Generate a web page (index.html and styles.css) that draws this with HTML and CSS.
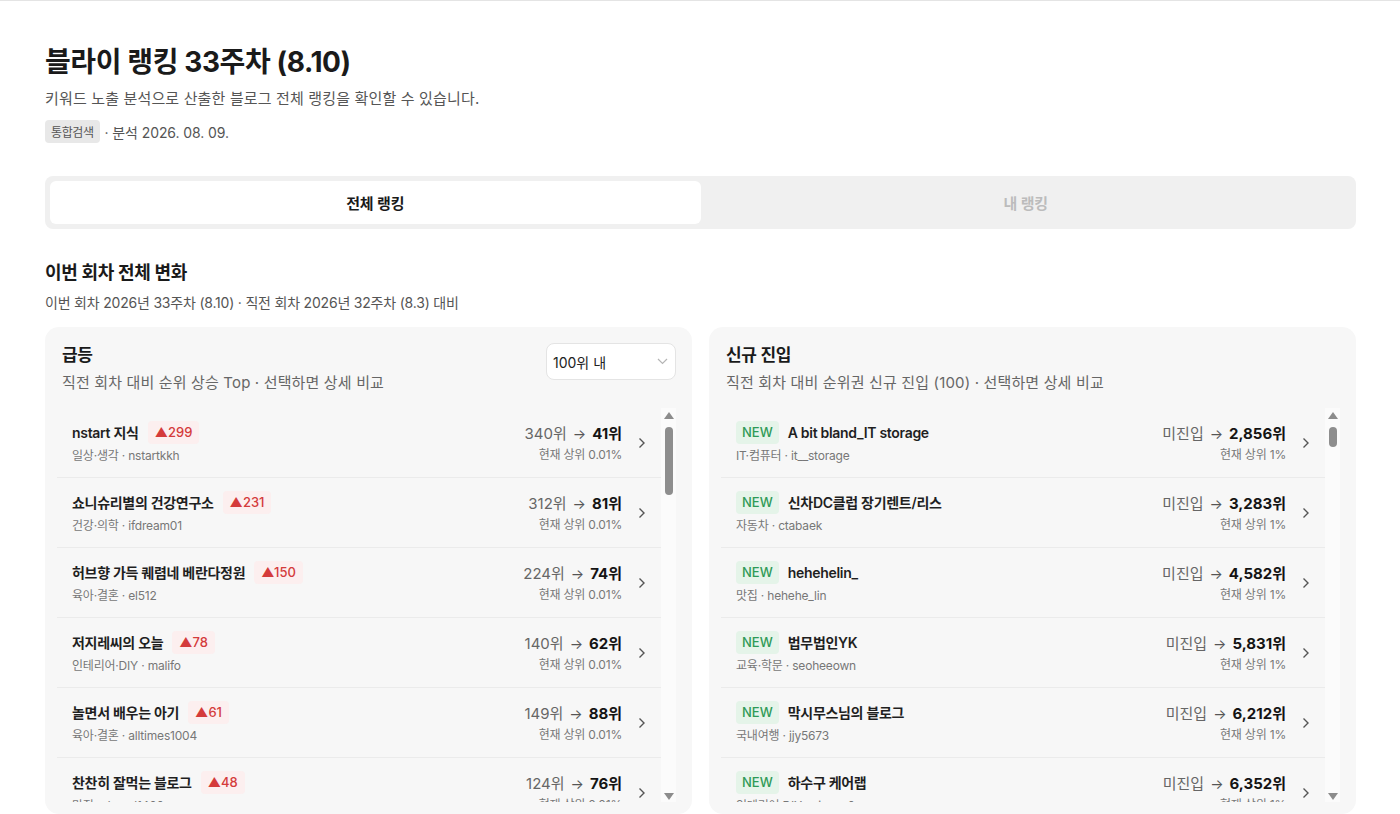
FILE: index.html
```html
<!DOCTYPE html>
<html lang="ko">
<head>
<meta charset="utf-8">
<title>블라이 랭킹 33주차 (8.10)</title>
<link rel="stylesheet" href="styles.css">
</head>
<body>
<div class="page">
  <h1 class="title">블라이 랭킹 33주차 (8.10)</h1>
  <p class="desc">키워드 노출 분석으로 산출한 블로그 전체 랭킹을 확인할 수 있습니다.</p>
  <div class="meta-line"><span class="tag">통합검색</span><span class="meta-text">· 분석 2026. 08. 09.</span></div>

  <div class="tabs">
    <button class="tab active">전체 랭킹</button>
    <button class="tab">내 랭킹</button>
  </div>

  <h2 class="section-title">이번 회차 전체 변화</h2>
  <p class="section-sub">이번 회차 2026년 33주차 (8.10) · 직전 회차 2026년 32주차 (8.3) 대비</p>

  <div class="cards">
    <section class="card">
      <div class="card-head">
        <div>
          <h3 class="card-title">급등</h3>
          <p class="card-sub">직전 회차 대비 순위 상승 Top · 선택하면 상세 비교</p>
        </div>
        <div class="select">
          <span>100위 내</span>
          <svg class="select-chev" width="11" height="7" viewBox="0 0 11 7"><path d="M1 1l4.5 4.5L10 1" fill="none" stroke="#b5b5b5" stroke-width="1.2"/></svg>
        </div>
      </div>
      <div class="list-wrap">
        <div class="list">
          <div class="row">
            <div class="row-main">
              <div class="row-name"><span class="name">nstart 지식</span><span class="badge up">▲299</span></div>
              <div class="row-meta">일상·생각 · nstartkkh</div>
            </div>
            <div class="row-stats">
              <div class="rank"><span class="prev">340위</span><span class="arrow">→</span><span class="now">41위</span></div>
              <div class="pct">현재 상위 0.01%</div>
            </div>
            <svg class="chev" width="8" height="12" viewBox="0 0 8 12"><path d="M1.5 1.5L6 6l-4.5 4.5" fill="none" stroke="#555" stroke-width="1.4"/></svg>
          </div>
          <div class="row">
            <div class="row-main">
              <div class="row-name"><span class="name">쇼니슈리별의 건강연구소</span><span class="badge up">▲231</span></div>
              <div class="row-meta">건강·의학 · ifdream01</div>
            </div>
            <div class="row-stats">
              <div class="rank"><span class="prev">312위</span><span class="arrow">→</span><span class="now">81위</span></div>
              <div class="pct">현재 상위 0.01%</div>
            </div>
            <svg class="chev" width="8" height="12" viewBox="0 0 8 12"><path d="M1.5 1.5L6 6l-4.5 4.5" fill="none" stroke="#555" stroke-width="1.4"/></svg>
          </div>
          <div class="row">
            <div class="row-main">
              <div class="row-name"><span class="name">허브향 가득 퀘렴네 베란다정원</span><span class="badge up">▲150</span></div>
              <div class="row-meta">육아·결혼 · el512</div>
            </div>
            <div class="row-stats">
              <div class="rank"><span class="prev">224위</span><span class="arrow">→</span><span class="now">74위</span></div>
              <div class="pct">현재 상위 0.01%</div>
            </div>
            <svg class="chev" width="8" height="12" viewBox="0 0 8 12"><path d="M1.5 1.5L6 6l-4.5 4.5" fill="none" stroke="#555" stroke-width="1.4"/></svg>
          </div>
          <div class="row">
            <div class="row-main">
              <div class="row-name"><span class="name">저지레씨의 오늘</span><span class="badge up">▲78</span></div>
              <div class="row-meta">인테리어·DIY · malifo</div>
            </div>
            <div class="row-stats">
              <div class="rank"><span class="prev">140위</span><span class="arrow">→</span><span class="now">62위</span></div>
              <div class="pct">현재 상위 0.01%</div>
            </div>
            <svg class="chev" width="8" height="12" viewBox="0 0 8 12"><path d="M1.5 1.5L6 6l-4.5 4.5" fill="none" stroke="#555" stroke-width="1.4"/></svg>
          </div>
          <div class="row">
            <div class="row-main">
              <div class="row-name"><span class="name">놀면서 배우는 아기</span><span class="badge up">▲61</span></div>
              <div class="row-meta">육아·결혼 · alltimes1004</div>
            </div>
            <div class="row-stats">
              <div class="rank"><span class="prev">149위</span><span class="arrow">→</span><span class="now">88위</span></div>
              <div class="pct">현재 상위 0.01%</div>
            </div>
            <svg class="chev" width="8" height="12" viewBox="0 0 8 12"><path d="M1.5 1.5L6 6l-4.5 4.5" fill="none" stroke="#555" stroke-width="1.4"/></svg>
          </div>
          <div class="row">
            <div class="row-main">
              <div class="row-name"><span class="name">찬찬히 잘먹는 블로그</span><span class="badge up">▲48</span></div>
              <div class="row-meta">맛집 · dmeal1400</div>
            </div>
            <div class="row-stats">
              <div class="rank"><span class="prev">124위</span><span class="arrow">→</span><span class="now">76위</span></div>
              <div class="pct">현재 상위 0.01%</div>
            </div>
            <svg class="chev" width="8" height="12" viewBox="0 0 8 12"><path d="M1.5 1.5L6 6l-4.5 4.5" fill="none" stroke="#555" stroke-width="1.4"/></svg>
          </div>
        </div>
        <div class="scrollbar">
          <span class="sb-up"></span>
          <div class="sb-track"><span class="sb-thumb thumb-rise"></span></div>
          <span class="sb-down"></span>
        </div>
      </div>
    </section>

    <section class="card">
      <div class="card-head">
        <div>
          <h3 class="card-title">신규 진입</h3>
          <p class="card-sub">직전 회차 대비 순위권 신규 진입 (100) · 선택하면 상세 비교</p>
        </div>
      </div>
      <div class="list-wrap">
        <div class="list">
          <div class="row">
            <div class="row-main">
              <div class="row-name"><span class="badge new">NEW</span><span class="name">A bit bland_IT storage</span></div>
              <div class="row-meta">IT·컴퓨터 · it__storage</div>
            </div>
            <div class="row-stats">
              <div class="rank"><span class="prev">미진입</span><span class="arrow">→</span><span class="now">2,856위</span></div>
              <div class="pct">현재 상위 1%</div>
            </div>
            <svg class="chev" width="8" height="12" viewBox="0 0 8 12"><path d="M1.5 1.5L6 6l-4.5 4.5" fill="none" stroke="#555" stroke-width="1.4"/></svg>
          </div>
          <div class="row">
            <div class="row-main">
              <div class="row-name"><span class="badge new">NEW</span><span class="name">신차DC클럽 장기렌트/리스</span></div>
              <div class="row-meta">자동차 · ctabaek</div>
            </div>
            <div class="row-stats">
              <div class="rank"><span class="prev">미진입</span><span class="arrow">→</span><span class="now">3,283위</span></div>
              <div class="pct">현재 상위 1%</div>
            </div>
            <svg class="chev" width="8" height="12" viewBox="0 0 8 12"><path d="M1.5 1.5L6 6l-4.5 4.5" fill="none" stroke="#555" stroke-width="1.4"/></svg>
          </div>
          <div class="row">
            <div class="row-main">
              <div class="row-name"><span class="badge new">NEW</span><span class="name">hehehelin_</span></div>
              <div class="row-meta">맛집 · hehehe_lin</div>
            </div>
            <div class="row-stats">
              <div class="rank"><span class="prev">미진입</span><span class="arrow">→</span><span class="now">4,582위</span></div>
              <div class="pct">현재 상위 1%</div>
            </div>
            <svg class="chev" width="8" height="12" viewBox="0 0 8 12"><path d="M1.5 1.5L6 6l-4.5 4.5" fill="none" stroke="#555" stroke-width="1.4"/></svg>
          </div>
          <div class="row">
            <div class="row-main">
              <div class="row-name"><span class="badge new">NEW</span><span class="name">법무법인YK</span></div>
              <div class="row-meta">교육·학문 · seoheeown</div>
            </div>
            <div class="row-stats">
              <div class="rank"><span class="prev">미진입</span><span class="arrow">→</span><span class="now">5,831위</span></div>
              <div class="pct">현재 상위 1%</div>
            </div>
            <svg class="chev" width="8" height="12" viewBox="0 0 8 12"><path d="M1.5 1.5L6 6l-4.5 4.5" fill="none" stroke="#555" stroke-width="1.4"/></svg>
          </div>
          <div class="row">
            <div class="row-main">
              <div class="row-name"><span class="badge new">NEW</span><span class="name">막시무스님의 블로그</span></div>
              <div class="row-meta">국내여행 · jjy5673</div>
            </div>
            <div class="row-stats">
              <div class="rank"><span class="prev">미진입</span><span class="arrow">→</span><span class="now">6,212위</span></div>
              <div class="pct">현재 상위 1%</div>
            </div>
            <svg class="chev" width="8" height="12" viewBox="0 0 8 12"><path d="M1.5 1.5L6 6l-4.5 4.5" fill="none" stroke="#555" stroke-width="1.4"/></svg>
          </div>
          <div class="row">
            <div class="row-main">
              <div class="row-name"><span class="badge new">NEW</span><span class="name">하수구 케어랩</span></div>
              <div class="row-meta">인테리어·DIY · ciscne0c</div>
            </div>
            <div class="row-stats">
              <div class="rank"><span class="prev">미진입</span><span class="arrow">→</span><span class="now">6,352위</span></div>
              <div class="pct">현재 상위 1%</div>
            </div>
            <svg class="chev" width="8" height="12" viewBox="0 0 8 12"><path d="M1.5 1.5L6 6l-4.5 4.5" fill="none" stroke="#555" stroke-width="1.4"/></svg>
          </div>
        </div>
        <div class="scrollbar">
          <span class="sb-up"></span>
          <div class="sb-track"><span class="sb-thumb thumb-new"></span></div>
          <span class="sb-down"></span>
        </div>
      </div>
    </section>
  </div>
</div>
</body>
</html>
```

FILE: styles.css
```css
* { box-sizing: border-box; }
html, body { margin: 0; padding: 0; background: #fff; }
body {
  font-family: Inter, "Noto Sans CJK KR", sans-serif;
  color: #1a1a1a;
  border-top: 1px solid #e4e4e4;
}
.page { padding: 43px 44px 0 45px; }

.title {
  margin: 0;
  font-size: 28px;
  line-height: 36px;
  font-weight: 700;
  letter-spacing: -0.4px;
  color: #1a1a1a;
}
.desc {
  margin: 8px 0 0;
  font-size: 15px;
  line-height: 22px;
  color: #555;
  letter-spacing: 0.15px;
}
.meta-line {
  margin-top: 10px;
  display: flex;
  align-items: center;
  gap: 5px;
  height: 23px;
}
.tag {
  display: inline-flex;
  align-items: center;
  height: 23px;
  padding: 0 6px;
  border-radius: 4px;
  background: #e8e8e8;
  color: #555;
  font-size: 12px;
  letter-spacing: -0.4px;
}
.meta-text { font-size: 14px; color: #555; letter-spacing: -0.1px; }

.tabs {
  margin-top: 33px;
  display: grid;
  grid-template-columns: 1fr 1fr;
  padding: 5px;
  background: #f0f0f0;
  border-radius: 8px;
}
.tab {
  height: 43px;
  border: 0;
  background: transparent;
  border-radius: 6px;
  font-family: inherit;
  font-size: 15px;
  font-weight: 600;
  color: #bcbcbc;
  letter-spacing: -0.2px;
}
.tab.active { background: #fff; color: #1a1a1a; }

.section-title {
  margin: 31px 0 0;
  font-size: 18px;
  line-height: 26px;
  font-weight: 700;
  letter-spacing: -0.3px;
}
.section-sub {
  margin: 7px 0 0;
  font-size: 14px;
  line-height: 20px;
  color: #555;
  letter-spacing: -0.2px;
}

.cards {
  margin-top: 14px;
  display: grid;
  grid-template-columns: 1fr 1fr;
  gap: 17px;
}
.card {
  background: #f7f7f7;
  border-radius: 14px;
  padding: 16px 16px 12px 12px;
}
.card-head {
  display: flex;
  justify-content: space-between;
  align-items: flex-start;
  padding-left: 5px;
  min-height: 51px;
}
.card-title {
  margin: 0;
  font-size: 17px;
  line-height: 24px;
  font-weight: 700;
  letter-spacing: -0.3px;
}
.card-sub {
  margin: 5px 0 0;
  font-size: 15px;
  line-height: 22px;
  color: #666;
  letter-spacing: 0.15px;
}
.select {
  width: 130px;
  height: 37px;
  background: #fff;
  border: 1px solid #e4e4e4;
  border-radius: 8px;
  display: flex;
  align-items: center;
  justify-content: space-between;
  padding: 0 7px 0 6px;
  font-size: 14px;
  color: #222;
}

.list-wrap {
  margin-top: 14px;
  height: 394px;
  display: flex;
}
.list {
  flex: 1;
  min-width: 0;
  overflow: hidden;
}

.scrollbar {
  width: 15px;
  flex: none;
  background: #fbfbfb;
  display: flex;
  flex-direction: column;
  align-items: center;
  padding: 4px 0 2px;
}
.sb-up, .sb-down {
  width: 0;
  height: 0;
  border-left: 5px solid transparent;
  border-right: 5px solid transparent;
  flex: none;
}
.sb-up { border-bottom: 7px solid #8c8c8c; }
.sb-down { border-top: 7px solid #8c8c8c; }
.sb-track {
  flex: 1;
  width: 100%;
  display: flex;
  justify-content: center;
  align-items: flex-start;
  padding-top: 8px;
}
.sb-thumb {
  width: 8px;
  border-radius: 4px;
  background: #8e8e8e;
}
.thumb-rise { height: 68px; }
.thumb-new { height: 20px; }

.row {
  display: flex;
  align-items: center;
  padding: 13px 15px 12px;
  border-bottom: 1px solid #ebebeb;
}
.row-main { flex: 1; min-width: 0; }
.row-name {
  display: flex;
  align-items: center;
  gap: 9px;
  height: 22px;
}
.name {
  font-size: 14px;
  font-weight: 600;
  color: #1f1f1f;
  letter-spacing: -0.3px;
  white-space: nowrap;
}
.badge {
  display: inline-flex;
  align-items: center;
  height: 23px;
  padding: 0 7px;
  border-radius: 4px;
  font-size: 13px;
  font-weight: 500;
}
.badge.up { background: #fcefef; color: #d43b3b; }
.badge.new { background: #e5f4e9; color: #2f9a57; padding: 0 6px; }
.row-meta {
  margin-top: 4px;
  font-size: 12px;
  line-height: 18px;
  color: #777;
  letter-spacing: -0.2px;
}
.row-stats { text-align: right; }
.rank {
  font-size: 15px;
  line-height: 22px;
  white-space: nowrap;
}
.prev { color: #666; }
.arrow { color: #555; margin: 0 6px; font-size: 14px; }
.now { font-weight: 700; color: #141414; }
.pct {
  margin-top: 1px;
  font-size: 12px;
  line-height: 18px;
  color: #777;
  letter-spacing: -0.2px;
}
.chev { margin-left: 16px; flex: none; }
```
